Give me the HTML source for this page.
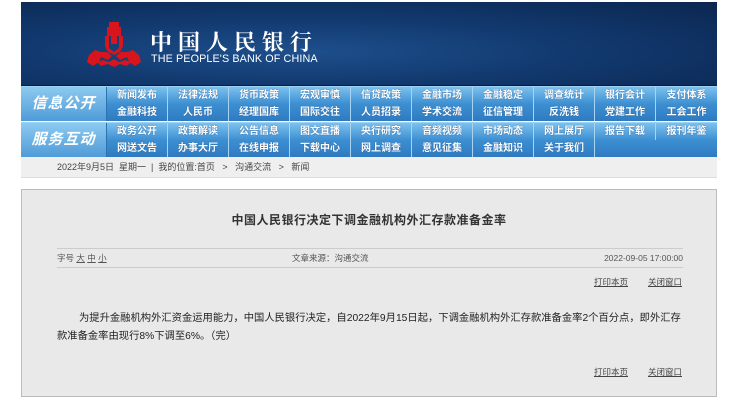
<!DOCTYPE html>
<html><head><meta charset="utf-8">
<style>
*{margin:0;padding:0;box-sizing:border-box}
body{width:735px;height:405px;background:#fff;font-family:"Liberation Sans","Noto Sans CJK SC","WenQuanYi Zen Hei",sans-serif;position:relative;overflow:hidden}
.wrap{position:absolute;left:21px;top:2px;width:696px}
.hdr{height:84px;background:radial-gradient(ellipse at 40% 60%,#1e4f8c 0%,#123a70 45%,#0b2650 100%);position:relative;border-bottom:1px solid #0a1c3c}
.cn{position:absolute;left:129px;top:24px;color:#fff;font-size:22px;font-weight:bold;letter-spacing:6px;font-family:"Noto Serif CJK SC","Noto Sans CJK SC",serif}
.en{position:absolute;left:130px;top:51px;color:#fff;font-size:10.8px;letter-spacing:0.1px}
.nav{position:relative;height:35px;background:linear-gradient(#7cc1ee,#3d8fd2 50%,#2f7ac0);border-top:1px solid #9fd3f3}
.nav+.nav{margin-top:1px}
.lab{position:absolute;left:0;top:0;width:86px;height:34px;background:linear-gradient(#8ccaf0,#4f9bd8);color:#fff;font-style:italic;font-size:15px;font-weight:bold;line-height:34px;text-align:center;letter-spacing:1px;border-right:1px solid #2f72b0}
.row{position:absolute;left:86px;height:17px;display:flex}
.row div{width:61px;text-align:center;color:#fff;font-size:10px;font-weight:bold;line-height:17px;border-right:1px solid #a8d4f2;text-shadow:0 0 1px #1a4d86}
.row div:last-child{border-right:none}
.r1{top:0}.r2{top:17px}
.bc{height:21px;background:#efefef;font-size:9px;color:#444;line-height:21px;padding-left:36px;border-bottom:1px solid #ddd}
.box{position:absolute;left:21px;top:189px;width:696px;height:208px;background:#e9e9e9;border:1px solid #bcbcbc}
.ttl{position:absolute;left:0;width:100%;top:21px;text-align:center;font-size:12px;font-weight:bold;color:#333;letter-spacing:0.5px}
.meta{position:absolute;left:35px;width:626px;top:58px;height:20px;border-top:1px solid #ccc;border-bottom:1px solid #ccc;font-size:8.5px;color:#555;line-height:19px}
.lk{position:absolute;right:34px;font-size:8.5px;color:#444}
.lk span{text-decoration:underline;margin-left:20px}
.p{position:absolute;left:35px;width:628px;top:120px;font-size:10.3px;color:#222;line-height:18px;text-indent:22px}
</style></head><body>
<div class="wrap">
<div class="hdr">
<svg style="position:absolute;left:66px;top:20px" width="54" height="50" viewBox="0 0 54 50">
<g fill="#d8141c">
<polygon points="22,0 32,0 32,5 34,5 34,14 30,14 30,22 24,22 24,14 20,14 20,5 22,5"/>
<polygon points="18,14 22,14 22,26 27,30 32,26 32,14 36,14 36,24 33,30 27,33 21,30 18,24"/>
<polygon points="2,33 8,28 14,30 20,30 25,34 21,38 14,35 12,40 6,44 0,40"/>
<polygon points="52,33 46,28 40,30 34,30 29,34 33,38 40,35 42,40 48,44 54,40"/>
<polygon points="10,40 16,38 22,40 27,37 32,40 38,38 44,40 40,44 33,42 27,45 21,42 14,44"/>
</g></svg>
<div class="cn">中国人民银行</div>
<div class="en">THE PEOPLE'S BANK OF CHINA</div>
</div>
<div class="nav"><div class="lab">信息公开</div>
<div class="row r1"><div>新闻发布</div><div>法律法规</div><div>货币政策</div><div>宏观审慎</div><div>信贷政策</div><div>金融市场</div><div>金融稳定</div><div>调查统计</div><div>银行会计</div><div>支付体系</div></div>
<div class="row r2"><div>金融科技</div><div>人民币</div><div>经理国库</div><div>国际交往</div><div>人员招录</div><div>学术交流</div><div>征信管理</div><div>反洗钱</div><div>党建工作</div><div>工会工作</div></div></div>
<div class="nav"><div class="lab">服务互动</div>
<div class="row r1"><div>政务公开</div><div>政策解读</div><div>公告信息</div><div>图文直播</div><div>央行研究</div><div>音频视频</div><div>市场动态</div><div>网上展厅</div><div>报告下载</div><div>报刊年鉴</div></div>
<div class="row r2"><div>网送文告</div><div>办事大厅</div><div>在线申报</div><div>下载中心</div><div>网上调查</div><div>意见征集</div><div>金融知识</div><div>关于我们</div><div style="border:none"></div><div></div></div></div>
<div class="bc">2022年9月5日&nbsp; 星期一 &nbsp;|&nbsp; 我的位置:首页 &nbsp;&nbsp;&gt;&nbsp;&nbsp; 沟通交流 &nbsp;&nbsp;&gt;&nbsp;&nbsp; 新闻</div>
</div>
<div class="box">
<div class="ttl">中国人民银行决定下调金融机构外汇存款准备金率</div>
<div class="meta"><span style="position:absolute;left:0">字号 <u>大</u> <u>中</u> <u>小</u></span><span style="position:absolute;left:235px">文章来源：沟通交流</span><span style="position:absolute;right:0">2022-09-05 17:00:00</span></div>
<div class="lk" style="top:86px"><span>打印本页</span><span>关闭窗口</span></div>
<div class="p">为提升金融机构外汇资金运用能力，中国人民银行决定，自2022年9月15日起，下调金融机构外汇存款准备金率2个百分点，即外汇存款准备金率由现行8%下调至6%。（完）</div>
<div class="lk" style="top:176px"><span>打印本页</span><span>关闭窗口</span></div>
</div>
</body></html>
